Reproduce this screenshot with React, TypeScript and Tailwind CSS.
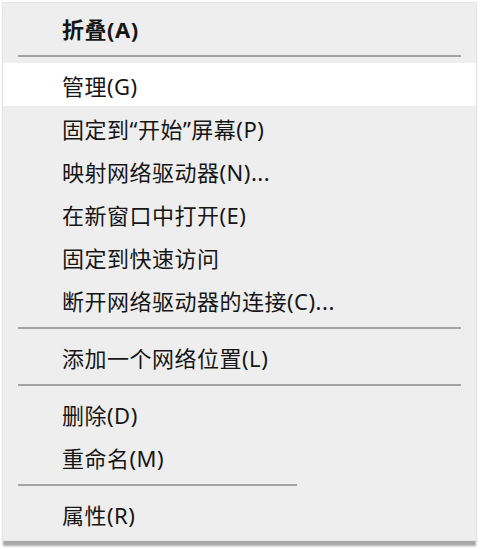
import React from 'react'

type Entry = { kind: 'item'; label: string; bold?: boolean; active?: boolean } | { kind: 'sep'; short?: boolean }

const entries: Entry[] = [
  { kind: 'item', label: '折叠(A)', bold: true },
  { kind: 'sep' },
  { kind: 'item', label: '管理(G)', active: true },
  { kind: 'item', label: '固定到“开始”屏幕(P)' },
  { kind: 'item', label: '映射网络驱动器(N)...' },
  { kind: 'item', label: '在新窗口中打开(E)' },
  { kind: 'item', label: '固定到快速访问' },
  { kind: 'item', label: '断开网络驱动器的连接(C)...' },
  { kind: 'sep' },
  { kind: 'item', label: '添加一个网络位置(L)' },
  { kind: 'sep' },
  { kind: 'item', label: '删除(D)' },
  { kind: 'item', label: '重命名(M)' },
  { kind: 'sep', short: true },
  { kind: 'item', label: '属性(R)' },
]

const ContextMenu = () => {
  return (
    <div className="mx-[2px] mt-[2px] w-[475px] border border-[#e4e4e4] bg-[#eeeeee] pt-[3px] pb-[5px] shadow-[0_6px_2px_-1px_#a8a8a8]">
      {entries.map((e, i) =>
        e.kind === 'sep' ? (
          <div key={i} className="flex h-[14px] items-center px-[15px]">
            <div className={`h-[2px] bg-[#a3a3a3] ${e.short ? 'w-[279px]' : 'w-full'}`} />
          </div>
        ) : (
          <div
            key={i}
            className={`flex h-[43px] items-center pt-[3px] pl-[59px] text-[22px] tracking-[0.5px] text-[#161616] ${e.bold ? 'font-bold' : 'font-normal'} ${e.active ? 'bg-white' : ''}`}
          >
            {e.label}
          </div>
        )
      )}
    </div>
  )
}

export default function App() {
  return (
    <div
      className="h-[549px] w-[480px] overflow-hidden bg-white"
      style={{ fontFamily: '"Noto Sans", "Noto Sans CJK SC", sans-serif' }}
    >
      <ContextMenu />
    </div>
  )
}
